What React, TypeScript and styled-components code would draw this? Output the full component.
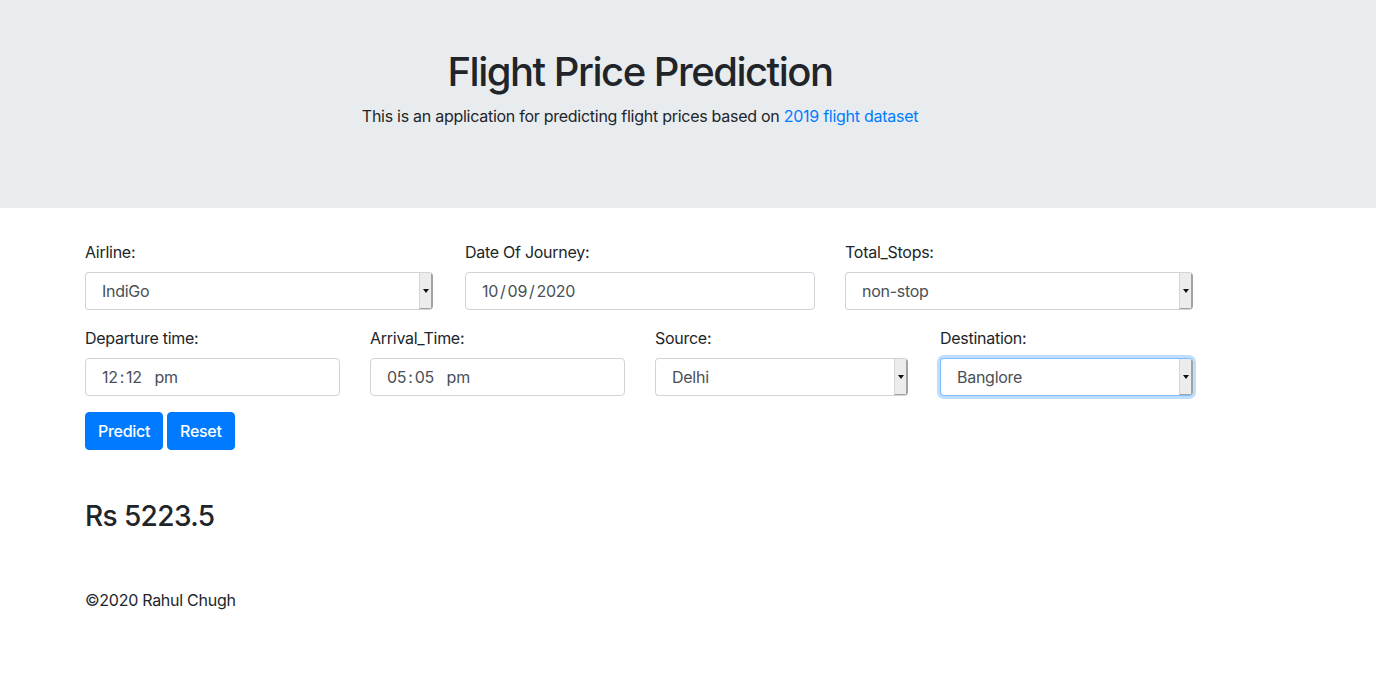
import React from "react";
import styled, { createGlobalStyle } from "styled-components";

const GlobalStyle = createGlobalStyle`
  * { box-sizing: border-box; }
  body {
    margin: 0;
    font-family: Inter, "Liberation Sans", Arial, sans-serif;
    font-size: 16px;
    line-height: 1.5;
    letter-spacing: -0.27px;
    color: #212529;
    background: #fff;
  }
`;

const Jumbotron = styled.header`
  background: #e9ecef;
  height: 208px;
  padding-top: 48px;
  margin-bottom: 32px;
  text-align: center;
`;

const Container = styled.div`
  width: 1140px;
  margin-left: 70px;
  padding: 0 15px;
`;

const Title = styled.h1`
  margin: 0 0 8px;
  font-size: 40px;
  font-weight: 500;
  line-height: 48px;
  letter-spacing: -1.5px;
`;

const Lead = styled.p`
  margin: 0;
  font-size: 16px;
  line-height: 24px;
`;

const Link = styled.a`
  color: #007bff;
  text-decoration: none;
`;

const Row = styled.div<{ $cols: number }>`
  display: grid;
  grid-template-columns: repeat(${(p) => p.$cols}, 1fr);
  column-gap: 30px;
  margin-bottom: 16px;
`;

const Group = styled.div`
  display: flex;
  flex-direction: column;
`;

const Label = styled.label`
  display: block;
  margin-bottom: 8px;
  line-height: 24px;
  font-size: 16px;
`;

const Field = styled.div<{ $focus?: boolean; $select?: boolean }>`
  display: flex;
  align-items: stretch;
  height: 38px;
  width: ${(p) => (p.$select ? "calc(100% - 2px)" : "100%")};
  border: 1px solid ${(p) => (p.$focus ? "#80bdff" : "#ced4da")};
  border-radius: 4px;
  ${(p) => (p.$focus ? "box-shadow: 0 0 0 3px rgba(0,123,255,.25);" : "")}
  color: #495057;
  background: #fff;
  overflow: hidden;
  ${(p) => (p.$select ? "border-right: none;" : "")}
`;

const Value = styled.span`
  flex: 1;
  display: flex;
  align-items: center;
  padding-left: 16px;
  font-size: 16px;
  white-space: pre;
`;

const Sep = styled.span`
  margin: 0 2px;
`;

const Arrow = styled.span`
  width: 14px;
  display: flex;
  align-items: center;
  justify-content: center;
  background: #ececec;
  border-left: 1px solid #d6d6d6;
  border-right: 2px solid #a3a3a3;
  border-bottom: 1px solid #a3a3a3;
  &::after {
    content: "";
    border-left: 3px solid transparent;
    border-right: 3px solid transparent;
    border-top: 4px solid #111;
  }
`;

const Buttons = styled.div`
  display: flex;
  gap: 4px;
`;

const Button = styled.button`
  font-family: inherit;
  font-size: 16px;
  line-height: 24px;
  letter-spacing: -0.3px;
  padding: 6px 12px;
  color: #fff;
  background: #007bff;
  border: 1px solid #007bff;
  border-radius: 4px;
  font-weight: 500;
`;

const Result = styled.h3`
  margin: 49px 0 0;
  font-size: 28px;
  font-weight: 500;
  line-height: 34px;
  letter-spacing: -0.6px;
`;

const Footer = styled.footer`
  margin-top: 55px;
  line-height: 24px;
`;

function Select({ value, focus }: { value: string; focus?: boolean }) {
  return (
    <Field $select $focus={focus}>
      <Value>{value}</Value>
      <Arrow />
    </Field>
  );
}

export default function App() {
  return (
    <>
      <GlobalStyle />
      <Jumbotron>
        <Container>
          <Title>Flight Price Prediction</Title>
          <Lead>
            This is an application for predicting flight prices based on{" "}
            <Link href="#">2019 flight dataset</Link>
          </Lead>
        </Container>
      </Jumbotron>
      <Container>
        <Row $cols={3}>
          <Group>
            <Label>Airline:</Label>
            <Select value="IndiGo" />
          </Group>
          <Group>
            <Label>Date Of Journey:</Label>
            <Field>
              <Value>
                10<Sep>/</Sep>09<Sep>/</Sep>2020
              </Value>
            </Field>
          </Group>
          <Group>
            <Label>Total_Stops:</Label>
            <Select value="non-stop" />
          </Group>
        </Row>
        <Row $cols={4}>
          <Group>
            <Label>Departure time:</Label>
            <Field>
              <Value>
                12<Sep>:</Sep>12{"   "}pm
              </Value>
            </Field>
          </Group>
          <Group>
            <Label>Arrival_Time:</Label>
            <Field>
              <Value>
                05<Sep>:</Sep>05{"   "}pm
              </Value>
            </Field>
          </Group>
          <Group>
            <Label>Source:</Label>
            <Select value="Delhi" />
          </Group>
          <Group>
            <Label>Destination:</Label>
            <Select value="Banglore" focus />
          </Group>
        </Row>
        <Buttons>
          <Button>Predict</Button>
          <Button>Reset</Button>
        </Buttons>
        <Result>Rs 5223.5</Result>
        <Footer>©2020 Rahul Chugh</Footer>
      </Container>
    </>
  );
}
